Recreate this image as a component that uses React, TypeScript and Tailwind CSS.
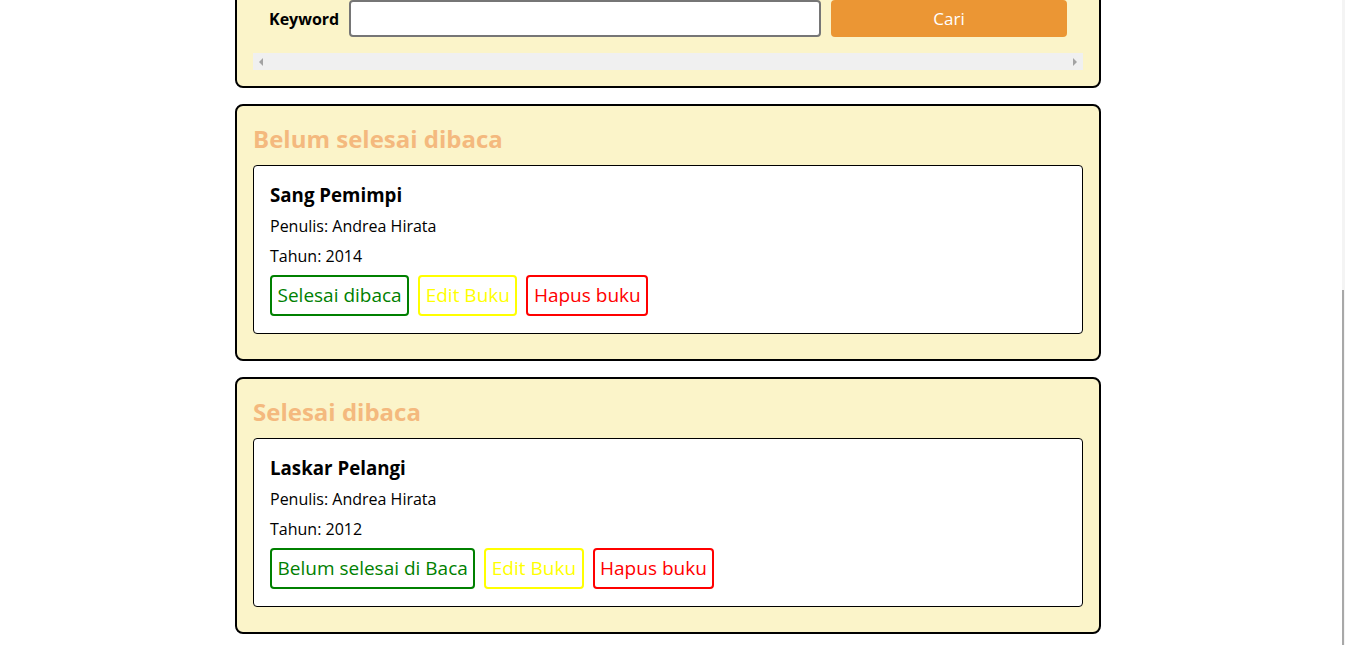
import React from 'react';

type Book = { title: string; author: string; year: number };

function BookCard({ book, toggleLabel }: { book: Book; toggleLabel: string }) {
  return (
    <div className="bg-white border border-black rounded-[4px] px-4 pt-[15px] pb-[17px]">
      <h3 className="text-[18.72px] font-bold leading-[28px] mb-[5px]">{book.title}</h3>
      <p className="text-[16px] leading-[24px] mb-[6px]">Penulis: {book.author}</p>
      <p className="text-[16px] leading-[24px] mb-[7px]">Tahun: {book.year}</p>
      <div className="flex gap-[9px]">
        <button className="border-2 border-[#008000] text-[#008000] rounded-[4px] px-[5.5px] h-[41px] text-[19px]">
          {toggleLabel}
        </button>
        <button className="border-2 border-[#ffff00] text-[#ffff00] rounded-[4px] px-[5.5px] h-[41px] text-[19px]">
          Edit Buku
        </button>
        <button className="border-2 border-[#ff0000] text-[#ff0000] rounded-[4px] px-[5.5px] h-[41px] text-[19px]">
          Hapus buku
        </button>
      </div>
    </div>
  );
}

function Shelf({ title, books, toggleLabel }: { title: string; books: Book[]; toggleLabel: string }) {
  return (
    <section className="bg-[#fbf4c9] border-2 border-black rounded-[8px] px-4 pt-[17px] pb-[25px]">
      <h2 className="text-[24px] font-bold text-[#f4b97e] leading-[32px] mb-[10px]">{title}</h2>
      <div className="flex flex-col gap-4">
        {books.map((b) => (
          <BookCard key={b.title} book={b} toggleLabel={toggleLabel} />
        ))}
      </div>
    </section>
  );
}

export default function App() {
  return (
    <div
      className="min-h-screen bg-white text-black overflow-hidden"
      style={{ fontFamily: '"Open Sans", "Liberation Sans", sans-serif' }}
    >
      <div className="w-[866px] ml-[235px] flex flex-col gap-[16px] -mt-[24px]">
        <section className="bg-[#fbf4c9] border-2 border-black rounded-[8px] px-4 pt-[22px] pb-[16px]">
          <div className="flex items-center h-[37px] pl-4">
            <label className="font-bold text-[16px] w-[80px]">Keyword</label>
            <input
              type="text"
              className="w-[472px] h-[37px] bg-white border-2 border-[#767676] rounded-[4px]"
            />
            <button className="ml-[10px] w-[236px] h-[37px] bg-[#eb9634] text-white rounded-[4px] text-[17px]">
              Cari
            </button>
          </div>
          <div className="mt-[16px] h-[17px] bg-[#f0f0f0] flex items-center justify-between px-[6px]">
            <span className="w-0 h-0 border-y-[4px] border-y-transparent border-r-[4px] border-r-[#a3a3a3]" />
            <span className="w-0 h-0 border-y-[4px] border-y-transparent border-l-[4px] border-l-[#a3a3a3]" />
          </div>
        </section>

        <Shelf
          title="Belum selesai dibaca"
          toggleLabel="Selesai dibaca"
          books={[{ title: 'Sang Pemimpi', author: 'Andrea Hirata', year: 2014 }]}
        />
        <Shelf
          title="Selesai dibaca"
          toggleLabel="Belum selesai di Baca"
          books={[{ title: 'Laskar Pelangi', author: 'Andrea Hirata', year: 2012 }]}
        />
      </div>

      <div className="fixed top-0 right-0 w-[3px] h-screen bg-[#f4f4f4] flex flex-col">
        <div className="mt-[290px] flex-1 w-[2px] bg-[#a8a8a8]" />
      </div>
    </div>
  );
}
